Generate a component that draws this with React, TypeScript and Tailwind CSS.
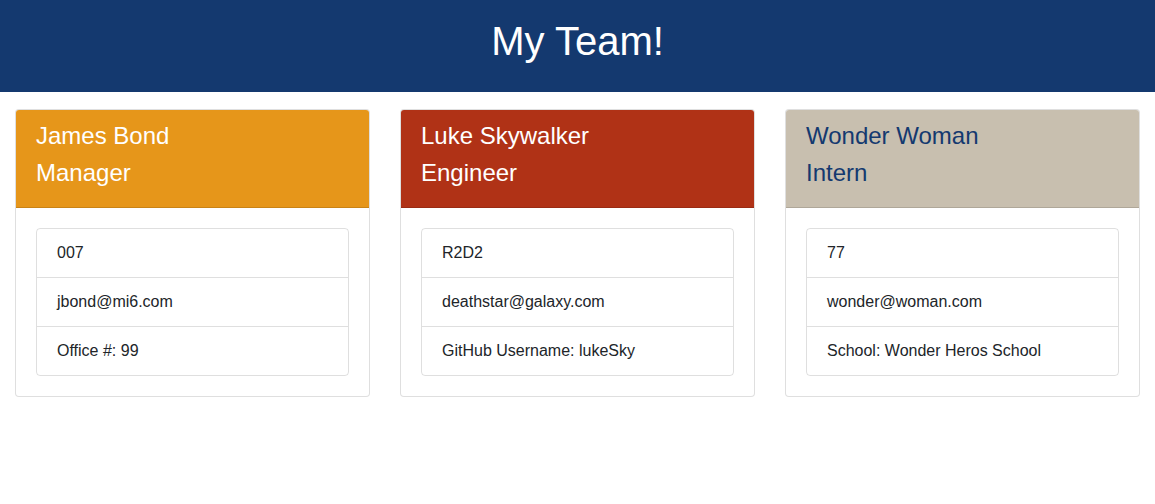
import React from "react";

type Member = {
  name: string;
  role: string;
  id: string;
  email: string;
  extra: string;
  headerClass: string;
};

const team: Member[] = [
  {
    name: "James Bond",
    role: "Manager",
    id: "007",
    email: "jbond@mi6.com",
    extra: "Office #: 99",
    headerClass: "bg-[#e6961a] text-white",
  },
  {
    name: "Luke Skywalker",
    role: "Engineer",
    id: "R2D2",
    email: "deathstar@galaxy.com",
    extra: "GitHub Username: lukeSky",
    headerClass: "bg-[#b03216] text-white",
  },
  {
    name: "Wonder Woman",
    role: "Intern",
    id: "77",
    email: "wonder@woman.com",
    extra: "School: Wonder Heros School",
    headerClass: "bg-[#c8bfaf] text-[#14396f]",
  },
];

function TeamCard({ m }: { m: Member }) {
  return (
    <div className="px-[15px]">
      <div className="rounded border border-black/[.125] bg-white">
        {/* Card header */}
        <div className={`rounded-t-[3px] border-b border-black/[.125] px-5 pt-3 pb-[11px] ${m.headerClass}`}>
          <h4 className="mb-2 text-2xl leading-[1.2]">{m.name}</h4>
          <h4 className="mb-2 text-2xl leading-[1.2]">{m.role}</h4>
        </div>

        {/* Card body */}
        <div className="p-5">
          <ul className="rounded border border-black/[.125] text-base leading-6 text-[#212529]">
            <li className="px-5 py-3">{m.id}</li>
            <li className="border-t border-black/[.125] px-5 py-3">{m.email}</li>
            <li className="border-t border-black/[.125] px-5 py-3">{m.extra}</li>
          </ul>
        </div>
      </div>
    </div>
  );
}

export default function App() {
  return (
    <div className="min-h-screen bg-white font-['Liberation_Sans',Arial,sans-serif]">
      {/* Header */}
      <header className="bg-[#14396f] pt-[17px] pb-[27px] text-center">
        <h1 className="text-[40px] leading-[48px] text-white">My Team!</h1>
      </header>

      {/* Cards */}
      <section className="grid grid-cols-3 pt-[17px]">
        {team.map((m) => (
          <TeamCard key={m.name} m={m} />
        ))}
      </section>
    </div>
  );
}
